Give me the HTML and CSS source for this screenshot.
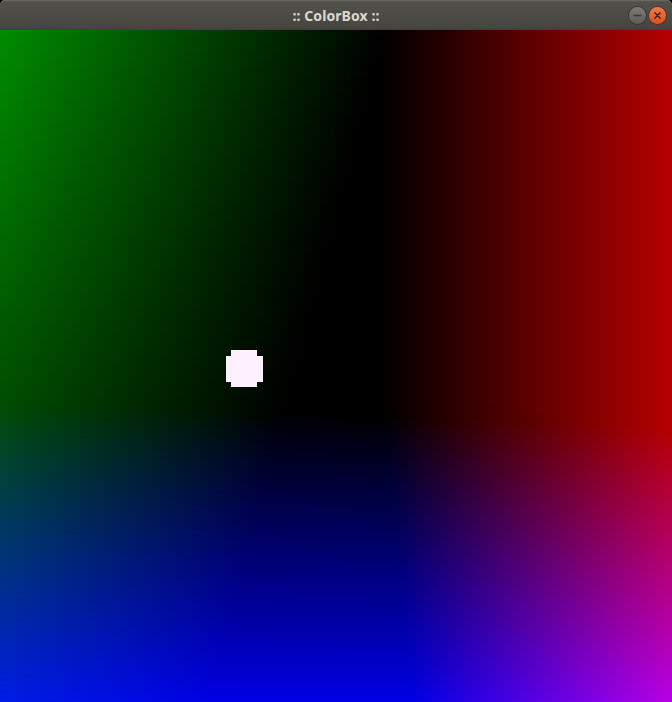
FILE: index.html
```html
<!DOCTYPE html>
<html>
<head>
<meta charset="utf-8">
<title>ColorBox</title>
<link rel="stylesheet" href="styles.css">
</head>
<body>
<div class="window">
  <div class="titlebar">
    <div class="title">:: ColorBox ::</div>
    <div class="controls">
      <span class="btn btn-min"><svg width="17" height="17" viewBox="0 0 17 17"><line x1="4.5" y1="8.5" x2="12.5" y2="8.5" stroke="#3a3936" stroke-width="1.6"/></svg></span>
      <span class="btn btn-close"><svg width="17" height="17" viewBox="0 0 17 17"><path d="M5.8 5.8 L11.2 11.2 M11.2 5.8 L5.8 11.2" stroke="#3a2418" stroke-width="1.4" stroke-linecap="round"/></svg></span>
    </div>
  </div>
  <canvas id="box" class="box" width="672" height="672"></canvas>
</div>
<script src="script.js"></script>
</body>
</html>
```

FILE: styles.css
```css
html, body {
  margin: 0;
  padding: 0;
  background: #000;
}
.window {
  width: 672px;
  height: 702px;
  display: flex;
  flex-direction: column;
  overflow: hidden;
}
.titlebar {
  position: relative;
  height: 30px;
  flex: 0 0 30px;
  display: flex;
  align-items: center;
  justify-content: center;
  background: linear-gradient(#5a5853 0px, #53514c 2px, #46453f 28px, #3e3d39 30px);
  border-radius: 5px 5px 0 0;
  box-shadow: inset 0 1px 0 #6a6862;
}
.title {
  font-family: "Noto Sans", "DejaVu Sans", sans-serif;
  font-weight: bold;
  font-size: 14px;
  color: #dcd8d0;
  letter-spacing: 0.1px;
}
.controls {
  position: absolute;
  right: 6px;
  top: 7px;
  display: flex;
  gap: 3px;
}
.btn {
  width: 17px;
  height: 17px;
  border-radius: 50%;
  display: block;
  box-sizing: border-box;
}
.btn svg { display: block; }
.btn-min {
  background: linear-gradient(#7d7b76, #5d5c58);
  box-shadow: 0 0 0 1px #36352f;
}
.btn-close {
  background: linear-gradient(#f3784b, #df4f1f);
  box-shadow: 0 0 0 1px #55331f;
}
.box {
  display: block;
  width: 672px;
  height: 672px;
}
```

FILE: script.js
```js
(function () {
  var c = document.getElementById('box');
  var ctx = c.getContext('2d');
  var W = 672, H = 672;
  var img = ctx.createImageData(W, H);
  var d = img.data;
  function cl(v) { return v < 0 ? 0 : (v > 1 ? 1 : v); }
  for (var y = 0; y < H; y++) {
    var v = y / H;
    for (var x = 0; x < W; x++) {
      var qx = Math.floor(x / 8) * 8 + 4;
      var u = qx / W;
      var tr = 0.57 + (v > 0.55 ? (v - 0.55) * 0.1 : 0);
      var r = 182 * cl((u - tr) / (1 - tr));
      var gl = 140 - 112 * v;
      var X = 0.57 - 0.26 * v;
      var g = gl * cl(1 - u / X);
      var tb = 0.55 + 0.04 * u;
      var b = 230 * cl((v - tb) / (1 - tb));
      var i = (y * W + x) * 4;
      d[i] = r; d[i + 1] = g; d[i + 2] = b; d[i + 3] = 255;
    }
  }
  ctx.putImageData(img, 0, 0);
  ctx.fillStyle = '#fff0ff';
  ctx.fillRect(226, 326, 37, 26);
  ctx.fillRect(231, 320, 26, 37);
})();
```
